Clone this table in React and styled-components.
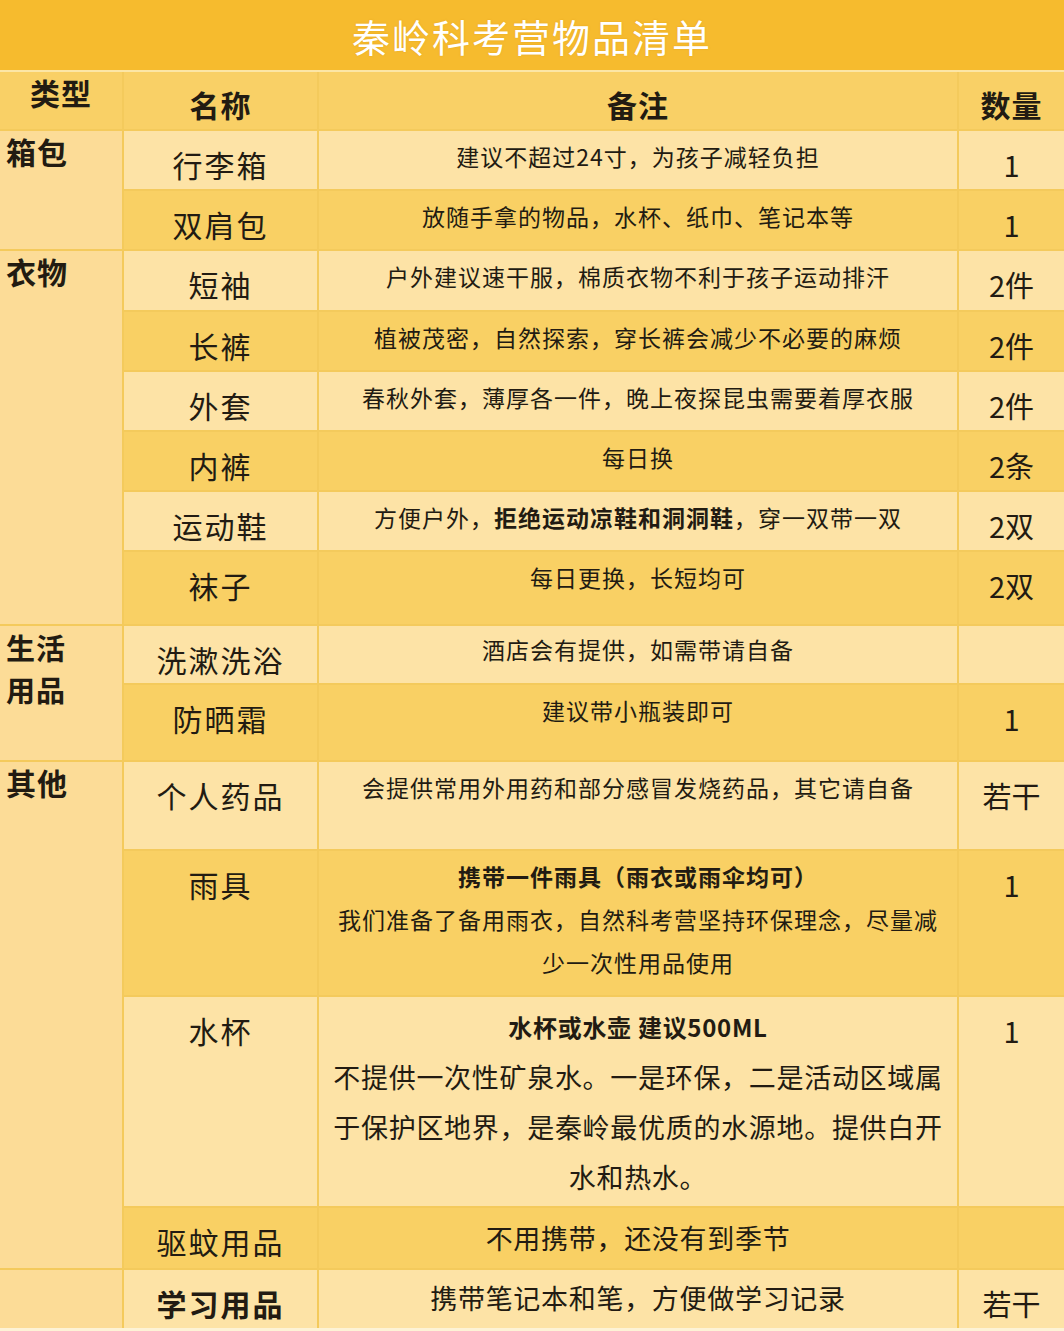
import React from "react";
import styled, { createGlobalStyle } from "styled-components";

const GlobalStyle = createGlobalStyle`
  html, body {
    margin: 0;
    padding: 0;
    background: #fdf3d6;
  }
  body {
    font-family: "Noto Sans CJK SC", "Noto Sans", sans-serif;
    color: #221b12;
  }
`;

const colors = {
  title: "#f6bb2e",
  titleLine: "#fce6a6",
  header: "#f9d066",
  light: "#fde3a6",
  dark: "#f9d064",
  type: "#fcdc97",
  line: "#f4ca5c",
};

const Sheet = styled.div`
  width: 1064px;
`;

const TitleBar = styled.div`
  height: 70px;
  background: ${colors.title};
  border-bottom: 2px solid ${colors.titleLine};
  display: flex;
  align-items: center;
  justify-content: center;
  color: #fff;
  font-size: 38px;
  letter-spacing: 2px;
  text-shadow: 0 0 2px rgba(200, 130, 0, 0.35);
`;

const Table = styled.div`
  display: flex;
  flex-direction: column;
  gap: 2px;
  background: ${colors.line};
`;

const HeaderRow = styled.div`
  display: grid;
  grid-template-columns: 122px 193px 638px 105px;
  column-gap: 2px;
  height: 57px;
`;

const HeadCell = styled.div`
  background: ${colors.header};
  font-size: 30px;
  font-weight: 700;
  line-height: 39px;
  text-align: center;
  padding-top: ${(p) => (p.$top ? 1 : 13)}px;
  letter-spacing: 1px;
`;

const Group = styled.div`
  display: grid;
  grid-template-columns: 122px 1fr;
  column-gap: 2px;
`;

const TypeCell = styled.div`
  background: ${colors.type};
  font-size: ${(p) => (p.$multi ? 29 : 30)}px;
  font-weight: 700;
  line-height: ${(p) => (p.$multi ? 42 : 39)}px;
  padding: ${(p) => (p.$multi ? 0 : 1)}px 0 0 6px;
  letter-spacing: 1px;
`;

const TypeLine = styled.span`
  display: block;
`;

const Items = styled.div`
  display: flex;
  flex-direction: column;
  gap: 2px;
`;

const ItemRow = styled.div`
  display: grid;
  grid-template-columns: 193px 638px 105px;
  column-gap: 2px;
  height: ${(p) => p.$h}px;
  & > div {
    background: ${(p) => (p.$dark ? colors.dark : colors.light)};
  }
`;

const NameCell = styled.div`
  font-size: 30px;
  line-height: 39px;
  padding-top: 14px;
  text-align: center;
  letter-spacing: 2px;
`;

const NoteCell = styled.div`
  font-size: ${(p) => (p.$lg ? 27 : 23)}px;
  line-height: ${(p) => (p.$lg ? 50 : 43)}px;
  letter-spacing: ${(p) => (p.$lg ? 0.7 : 1)}px;
  padding-top: ${(p) => p.$pt ?? 4}px;
  text-align: center;
  white-space: nowrap;
`;

const QtyCell = styled.div`
  font-size: 29px;
  line-height: 39px;
  padding-top: 14px;
  text-align: center;
`;

const B = styled.strong`
  font-weight: 700;
`;

const Lead = styled.strong`
  font-weight: 700;
  font-size: ${(p) => p.$size || 23}px;
`;

const groups = [
  {
    type: ["箱包"],
    items: [
      { name: "行李箱", h: 58, note: "建议不超过24寸，为孩子减轻负担", qty: "1" },
      { name: "双肩包", h: 58, note: "放随手拿的物品，水杯、纸巾、笔记本等", qty: "1" },
    ],
  },
  {
    type: ["衣物"],
    items: [
      { name: "短袖", h: 59, note: "户外建议速干服，棉质衣物不利于孩子运动排汗", qty: "2件" },
      { name: "长裤", h: 58, note: "植被茂密，自然探索，穿长裤会减少不必要的麻烦", qty: "2件" },
      { name: "外套", h: 58, note: "春秋外套，薄厚各一件，晚上夜探昆虫需要着厚衣服", qty: "2件" },
      { name: "内裤", h: 58, note: "每日换", qty: "2条" },
      {
        name: "运动鞋",
        h: 58,
        note: (
          <>
            方便户外，<B>拒绝运动凉鞋和洞洞鞋</B>，穿一双带一双
          </>
        ),
        qty: "2双",
      },
      { name: "袜子", h: 72, note: "每日更换，长短均可", qty: "2双" },
    ],
  },
  {
    type: ["生活", "用品"],
    items: [
      { name: "洗漱洗浴", h: 57, note: "酒店会有提供，如需带请自备", qty: "", pt: 2 },
      { name: "防晒霜", h: 75, note: "建议带小瓶装即可", qty: "1" },
    ],
  },
  {
    type: ["其他"],
    items: [
      { name: "个人药品", h: 87, note: "会提供常用外用药和部分感冒发烧药品，其它请自备", qty: "若干" },
      {
        name: "雨具",
        h: 144,
        note: (
          <>
            <Lead>携带一件雨具（雨衣或雨伞均可）</Lead>
            <br />
            我们准备了备用雨衣，自然科考营坚持环保理念，尽量减
            <br />
            少一次性用品使用
          </>
        ),
        qty: "1",
      },
      {
        name: "水杯",
        h: 209,
        lg: true,
        note: (
          <>
            <Lead $size={24}>水杯或水壶 建议500ML</Lead>
            <br />
            不提供一次性矿泉水。一是环保，二是活动区域属
            <br />
            于保护区地界，是秦岭最优质的水源地。提供白开
            <br />
            水和热水。
          </>
        ),
        qty: "1",
      },
      { name: "驱蚊用品", h: 60, lg: true, pt: 5, note: "不用携带，还没有到季节", qty: "" },
    ],
  },
  {
    type: [],
    items: [
      { name: <B>学习用品</B>, h: 58, lg: true, pt: 3, note: "携带笔记本和笔，方便做学习记录", qty: "若干" },
    ],
  },
];

export default function App() {
  let index = 0;
  return (
    <Sheet>
      <GlobalStyle />
      <TitleBar>秦岭科考营物品清单</TitleBar>
      <Table>
        <HeaderRow>
          <HeadCell $top>类型</HeadCell>
          <HeadCell>名称</HeadCell>
          <HeadCell>备注</HeadCell>
          <HeadCell>数量</HeadCell>
        </HeaderRow>
        {groups.map((g, gi) => (
          <Group key={gi}>
            <TypeCell $multi={g.type.length > 1}>
              {g.type.map((t) => (
                <TypeLine key={t}>{t}</TypeLine>
              ))}
            </TypeCell>
            <Items>
              {g.items.map((it, ii) => {
                const dark = index % 2 === 1;
                index += 1;
                return (
                  <ItemRow key={ii} $h={it.h} $dark={dark}>
                    <NameCell>{it.name}</NameCell>
                    <NoteCell $lg={it.lg} $pt={it.pt}>
                      {it.note}
                    </NoteCell>
                    <QtyCell>{it.qty}</QtyCell>
                  </ItemRow>
                );
              })}
            </Items>
          </Group>
        ))}
      </Table>
    </Sheet>
  );
}
